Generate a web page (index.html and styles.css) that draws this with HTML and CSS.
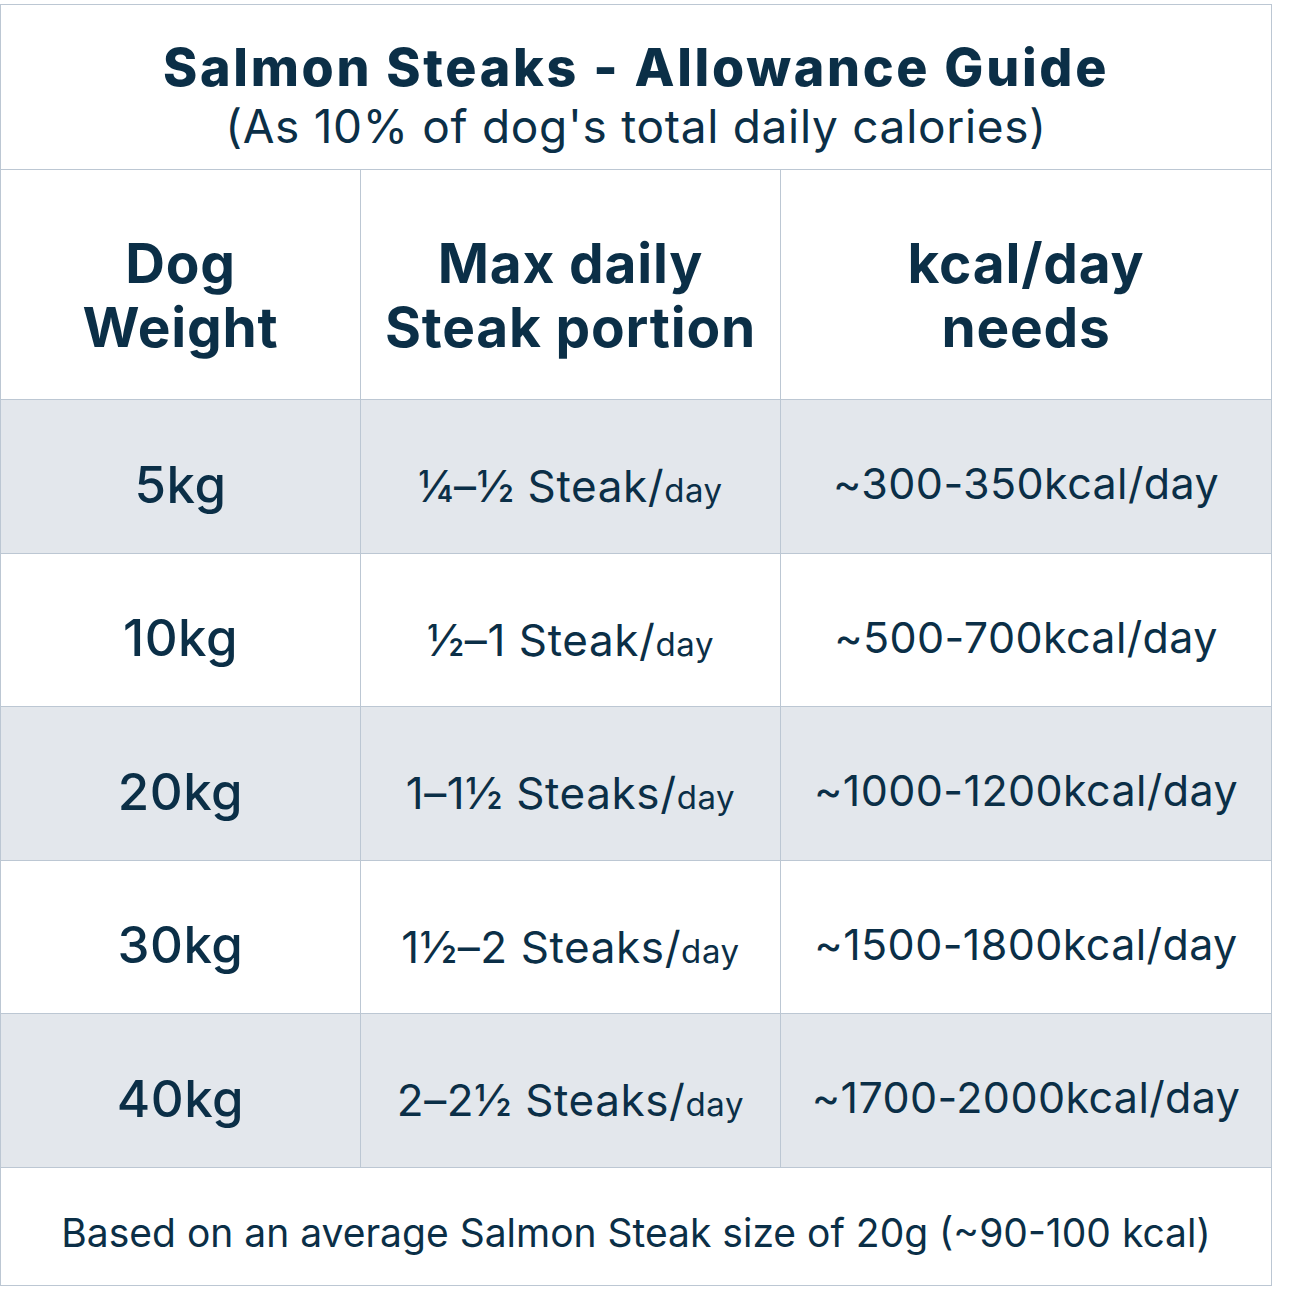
FILE: index.html
```html
<!DOCTYPE html>
<html lang="en">
<head>
<meta charset="utf-8">
<title>Salmon Steaks - Allowance Guide</title>
<link rel="stylesheet" href="styles.css">
</head>
<body>
<div class="guide">
  <div class="title-block">
    <div class="title">Salmon Steaks - Allowance Guide</div>
    <div class="subtitle">(As 10% of dog's total daily calories)</div>
  </div>
  <div class="grid">
    <div class="cell head">Dog<br>Weight</div>
    <div class="cell head">Max daily<br>Steak portion</div>
    <div class="cell head last">kcal/day<br>needs</div>

    <div class="cell alt weight">5kg</div>
    <div class="cell alt portion">¼–½ Steak/<span class="small">day</span></div>
    <div class="cell alt kcal last">~300-350kcal/day</div>

    <div class="cell weight">10kg</div>
    <div class="cell portion">½–1 Steak/<span class="small">day</span></div>
    <div class="cell kcal last">~500-700kcal/day</div>

    <div class="cell alt weight">20kg</div>
    <div class="cell alt portion">1–1½ Steaks/<span class="small">day</span></div>
    <div class="cell alt kcal last">~1000-1200kcal/day</div>

    <div class="cell weight">30kg</div>
    <div class="cell portion">1½–2 Steaks/<span class="small">day</span></div>
    <div class="cell kcal last">~1500-1800kcal/day</div>

    <div class="cell alt weight">40kg</div>
    <div class="cell alt portion">2–2½ Steaks/<span class="small">day</span></div>
    <div class="cell alt kcal last">~1700-2000kcal/day</div>
  </div>
  <div class="footer">Based on an average Salmon Steak size of 20g (~90-100 kcal)</div>
</div>
</body>
</html>
```

FILE: styles.css
```css
* { box-sizing: border-box; }
html, body { margin: 0; padding: 0; background: #ffffff; }
body {
  font-family: Inter, "Noto Sans", sans-serif;
  color: #0b2f47;
  padding-top: 4px;
}
.guide {
  width: 1272px;
  border: 1px solid #bcc7d3;
}
.title-block {
  height: 165px;
  border-bottom: 1px solid #bcc7d3;
  display: flex;
  flex-direction: column;
  align-items: center;
  justify-content: center;
  padding-top: 20px;
}
.title {
  font-weight: 800;
  font-size: 52px;
  line-height: 58px;
  letter-spacing: 2.7px;
}
.subtitle {
  font-weight: 400;
  font-size: 46px;
  line-height: 58px;
  letter-spacing: 0.7px;
}
.grid {
  display: grid;
  grid-template-columns: 360px 420px 1fr;
  grid-template-rows: 230px repeat(5, 153.5px);
}
.cell {
  border-right: 1px solid #bcc7d3;
  border-bottom: 1px solid #bcc7d3;
  display: flex;
  align-items: center;
  justify-content: center;
  text-align: center;
}
.cell.last { border-right: none; }
.alt { background: #e3e7ec; }
.head {
  font-weight: 700;
  font-size: 55px;
  line-height: 64px;
  letter-spacing: 0.8px;
  padding-top: 20px;
}
.weight {
  font-weight: 500;
  font-size: 51px;
  letter-spacing: 0.5px;
  padding-top: 16px;
}
.portion {
  font-size: 44px;
  font-weight: 400;
  letter-spacing: 0.6px;
  align-items: baseline;
  padding-top: 59px;
}
.portion .small { font-size: 33px; }
.kcal {
  font-size: 43px;
  font-weight: 400;
  letter-spacing: 0.4px;
  padding-top: 14px;
}
.footer {
  height: 117px;
  display: flex;
  align-items: center;
  justify-content: center;
  font-size: 39px;
  padding-top: 12px;
}
```
